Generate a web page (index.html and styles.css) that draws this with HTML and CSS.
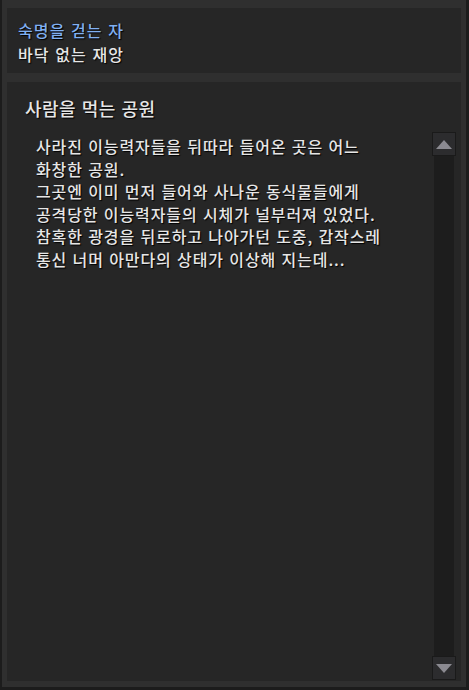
FILE: index.html
```html
<!DOCTYPE html>
<html lang="ko">
<head>
  <meta charset="UTF-8">
  <title>숙명을 걷는 자</title>
  <link rel="stylesheet" href="styles.css">
</head>
<body>
  <div class="frame">
    <div class="panel header-panel">
      <div class="chapter">숙명을 걷는 자</div>
      <div class="episode">바닥 없는 재앙</div>
    </div>

    <div class="panel story-panel">
      <h2 class="story-title">사람을 먹는 공원</h2>
      <div class="story-body">
        <p class="story-text">
          사라진 이능력자들을 뒤따라 들어온 곳은 어느<br>
          화창한 공원.<br>
          그곳엔 이미 먼저 들어와 사나운 동식물들에게<br>
          공격당한 이능력자들의 시체가 널부러져 있었다.<br>
          참혹한 광경을 뒤로하고 나아가던 도중, 갑작스레<br>
          통신 너머 아만다의 상태가 이상해 지는데...
        </p>
        <div class="scrollbar">
          <div class="scroll-btn"><span class="arrow-up"></span></div>
          <div class="scroll-track"></div>
          <div class="scroll-btn"><span class="arrow-down"></span></div>
        </div>
      </div>
    </div>
  </div>
</body>
</html>
```

FILE: styles.css
```css
html, body {
  margin: 0;
  padding: 0;
  background-color: #1b1b1b;
}

body {
  font-family: "Noto Sans CJK KR", "Noto Sans", sans-serif;
  font-weight: 500;
  color: #e6e6e6;
}

.frame {
  width: 469px;
  height: 690px;
  box-sizing: border-box;
  border-left: 2px solid #1c1c1c;
  border-right: 3px solid #1c1c1c;
  border-bottom: 3px solid #1c1c1c;
  background-color: #2f2f2f;
  padding: 8px 5px 6px 5px;
  display: flex;
  flex-direction: column;
  gap: 9px;
}

.panel {
  background-color: #262626;
  text-shadow: 1px 1px 1px #000;
}

.header-panel {
  height: 65px;
  box-sizing: border-box;
  padding: 10px 11px 0 11px;
}

.chapter {
  color: #80b0f2;
  font-size: 16px;
  line-height: 24px;
  letter-spacing: 1.1px;
}

.episode {
  font-size: 16px;
  line-height: 24px;
  letter-spacing: 1.1px;
}

.story-panel {
  flex: 1;
  display: flex;
  flex-direction: column;
  padding: 0 5px 1px 0;
}

.story-title {
  margin: 0;
  padding: 13px 0 0 18px;
  height: 50px;
  box-sizing: border-box;
  font-size: 18px;
  font-weight: 500;
  line-height: 26px;
  letter-spacing: 0.5px;
}

.story-body {
  flex: 1;
  display: flex;
}

.story-text {
  flex: 1;
  margin: 0;
  padding: 3px 0 0 29px;
  font-size: 16px;
  line-height: 22.6px;
  letter-spacing: 0.9px;
}

.scrollbar {
  width: 24px;
  display: flex;
  flex-direction: column;
  align-items: center;
}

.scroll-btn {
  width: 24px;
  height: 24px;
  box-sizing: border-box;
  border: 1px solid #1a1a1a;
  background-color: #2c2c2e;
  display: flex;
  align-items: center;
  justify-content: center;
}

.scroll-track {
  flex: 1;
  width: 20px;
  background-color: #1d1d1d;
}

.arrow-up {
  width: 0;
  height: 0;
  border-left: 8px solid transparent;
  border-right: 8px solid transparent;
  border-bottom: 9px solid #8b8a91;
}

.arrow-down {
  width: 0;
  height: 0;
  border-left: 8px solid transparent;
  border-right: 8px solid transparent;
  border-top: 9px solid #8b8a91;
}
```
